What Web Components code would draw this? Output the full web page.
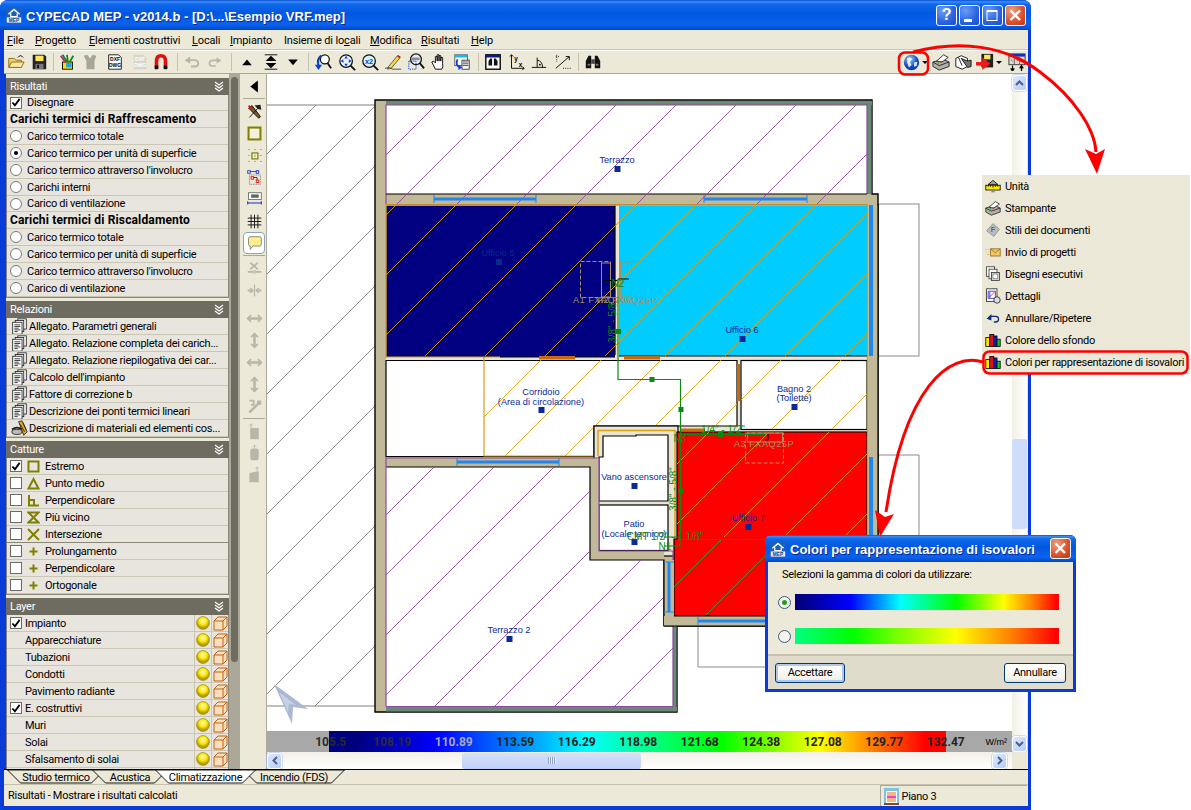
<!DOCTYPE html>
<html>
<head>
<meta charset="utf-8">
<title>CYPECAD MEP</title>
<style>
html,body{margin:0;padding:0;background:#fff;}
body{position:relative;width:1191px;height:810px;overflow:hidden;font-family:Roboto,"Liberation Sans",sans-serif;font-size:11px;letter-spacing:-.28px;color:#000;}
</style>
</head>
<body>
<xp-window>
  <xp-title slot="title" caption="CYPECAD MEP - v2014.b - [D:\...\Esempio VRF.mep]"></xp-title>
  <menu-bar slot="menu"></menu-bar>
  <tool-bar slot="tools"></tool-bar>
  <side-panel slot="side">
    <panel-box caption="Risultati" style="margin-bottom:3px">
      <panel-row type="check" checked h="16">Disegnare</panel-row>
      <panel-row type="bold">Carichi termici di Raffrescamento</panel-row>
      <panel-row type="radio">Carico termico totale</panel-row>
      <panel-row type="radio" checked>Carico termico per unità di superficie</panel-row>
      <panel-row type="radio">Carico termico attraverso l'involucro</panel-row>
      <panel-row type="radio">Carichi interni</panel-row>
      <panel-row type="radio" h="16">Carico di ventilazione</panel-row>
      <panel-row type="bold">Carichi termici di Riscaldamento</panel-row>
      <panel-row type="radio">Carico termico totale</panel-row>
      <panel-row type="radio">Carico termico per unità di superficie</panel-row>
      <panel-row type="radio">Carico termico attraverso l'involucro</panel-row>
      <panel-row type="radio">Carico di ventilazione</panel-row>
    </panel-box>
    <panel-box caption="Relazioni">
      <panel-row icon="doc">Allegato. Parametri generali</panel-row>
      <panel-row icon="doc">Allegato. Relazione completa dei carich...</panel-row>
      <panel-row icon="doc">Allegato. Relazione riepilogativa dei car...</panel-row>
      <panel-row icon="doc">Calcolo dell'impianto</panel-row>
      <panel-row icon="doc">Fattore di correzione b</panel-row>
      <panel-row icon="doc">Descrizione dei ponti termici lineari</panel-row>
      <panel-row icon="materials">Descrizione di materiali ed elementi cos...</panel-row>
    </panel-box>
    <panel-box caption="Catture">
      <panel-row type="check" checked snap="sSquare">Estremo</panel-row>
      <panel-row type="check" snap="sTri">Punto medio</panel-row>
      <panel-row type="check" snap="sPerp">Perpendicolare</panel-row>
      <panel-row type="check" snap="sNear">Più vicino</panel-row>
      <panel-row type="check" snap="sX" style="border-bottom-color:#8a8778">Intersezione</panel-row>
      <panel-row type="check" snap="sPlus">Prolungamento</panel-row>
      <panel-row type="check" snap="sPlus">Perpendicolare</panel-row>
      <panel-row type="check" snap="sPlus">Ortogonale</panel-row>
    </panel-box>
    <panel-box caption="Layer">
      <panel-row type="check" checked layer>Impianto</panel-row>
      <panel-row type="plain" layer>Apparecchiature</panel-row>
      <panel-row type="plain" layer>Tubazioni</panel-row>
      <panel-row type="plain" layer>Condotti</panel-row>
      <panel-row type="plain" layer>Pavimento radiante</panel-row>
      <panel-row type="check" checked layer>E. costruttivi</panel-row>
      <panel-row type="plain" layer>Muri</panel-row>
      <panel-row type="plain" layer>Solai</panel-row>
      <panel-row type="plain" layer>Sfalsamento di solai</panel-row>
      <panel-row type="plain" layer></panel-row>
    </panel-box>
  </side-panel>
  <v-toolbar slot="vtools"></v-toolbar>
  <cad-view slot="view"></cad-view>
  <tab-strip slot="tabs">
    <cad-tab w="98">Studio termico</cad-tab>
    <cad-tab w="76">Acustica</cad-tab>
    <cad-tab w="101" active>Climatizzazione</cad-tab>
    <cad-tab w="102">Incendio (FDS)</cad-tab>
  </tab-strip>
  <status-bar slot="status"></status-bar>
</xp-window>
<popup-menu>
  <popup-item icon="mUnit">Unità</popup-item>
  <popup-item icon="printer">Stampante</popup-item>
  <popup-item icon="mKey">Stili dei documenti</popup-item>
  <popup-item icon="mMail">Invio di progetti</popup-item>
  <popup-item icon="mDocs">Disegni esecutivi</popup-item>
  <popup-item icon="mDetail">Dettagli</popup-item>
  <popup-item icon="mUndo">Annullare/Ripetere</popup-item>
  <popup-item icon="bars">Colore dello sfondo</popup-item>
  <popup-item icon="bars">Colori per rappresentazione di isovalori</popup-item>
</popup-menu>
<iso-dialog></iso-dialog>
<callout-arrows></callout-arrows>

<script>
// helper for the shadow root of each element
function shadow(el, html){
    el.attachShadow({mode: 'open'});
    el.shadowRoot.innerHTML = html;
    return el.shadowRoot;
}
const LOGO = `<rect x="0" y="0" width="20" height="20" rx="1" fill="#1c5fb8"/><path d="M3 9 L10 3 L17 9 M6 8V12H14V8 M8 6V4M12 6V4" fill="none" stroke="#fff" stroke-width="1.6"/><rect x="1" y="13" width="18" height="6.5" fill="#e8eef8"/><text x="10" y="18.6" font-size="6" font-weight="700" text-anchor="middle" fill="#123a80" font-family="Liberation Sans">MEP</text>`;
const ln = 'fill="none" stroke="#000"';
const ICONS = {
    logo: LOGO,
    open: `<path d="M2 6H8L10 8H16V16H2Z" fill="#f4d070" stroke="#8a6a10"/><path d="M2 16L5 10H19L16 16Z" fill="#fbe7a0" stroke="#8a6a10"/><path d="M12 5Q15 1 18 5" ${ln} stroke-width="1"/>`,
    save: `<path d="M3 2H16L18 4V18H3Z" fill="#222"/><rect x="6" y="3" width="9" height="6" fill="#ffe860"/><rect x="6" y="12" width="9" height="6" fill="#777"/><rect x="8" y="13" width="2" height="4" fill="#111"/>`,
    wand: `<rect x="5" y="10" width="11" height="8" fill="#ffd800" stroke="#000"/><rect x="9" y="11" width="6" height="5" fill="#18a8e8"/><path d="M5 2L10 10M10 2L11 10M17 3L13 10" stroke="#0a8a20" stroke-width="2"/><path d="M3 3L8 10" stroke="#c02080" stroke-width="2"/>`,
    shirt: `<path d="M3 3L7 2L10 6L13 2L17 3L15 9V18H6V9Z" fill="#a8a698"/>`,
    dxf: `<path d="M3 2H14L17 5V18H3Z" fill="#fff" stroke="#111"/><text x="10" y="9" font-size="5.5" font-weight="700" text-anchor="middle" font-family="Liberation Sans">DXF</text><text x="10" y="15.5" font-size="5.5" font-weight="700" text-anchor="middle" font-family="Liberation Sans">DWG</text>`,
    dxf2: `<path d="M3 2H14L17 5V18H3Z" fill="#d8d6c8"/><text x="10" y="9" font-size="5.5" font-weight="700" text-anchor="middle" fill="#fff" font-family="Liberation Sans">DXF</text><text x="10" y="15.5" font-size="5.5" font-weight="700" text-anchor="middle" fill="#fff" font-family="Liberation Sans">DWG</text>`,
    magnet: `<path d="M5 17V9Q5 3 10 3Q15 3 15 9V17" fill="none" stroke="#e01010" stroke-width="4"/><rect x="3" y="14" width="4" height="4" fill="#111"/><rect x="13" y="14" width="4" height="4" fill="#111"/>`,
    undo: `<path d="M5 8H13Q17 8 17 12Q17 15 13 15H9" fill="none" stroke="#b8b6a8" stroke-width="2"/><path d="M8 4V12L2 8Z" fill="#b8b6a8"/>`,
    redo: `<path d="M15 8H7Q3 8 3 12Q3 15 7 15H11" fill="none" stroke="#b8b6a8" stroke-width="2"/><path d="M12 4V12L18 8Z" fill="#b8b6a8"/>`,
    up: `<path d="M4 14L10 7L16 14Z" fill="#000"/>`,
    both: `<path d="M3 2H17" stroke="#000"/><path d="M4 9L10 3L16 9Z" fill="#000"/><path d="M3 18H17" stroke="#000"/><path d="M4 11L10 17L16 11Z" fill="#000"/>`,
    down: `<path d="M4 7L10 14L16 7Z" fill="#000"/>`,
    zoomA: `<circle cx="12" cy="7" r="5" fill="#fff" stroke="#111" stroke-width="1.4"/><path d="M15 11L19 17" stroke="#111" stroke-width="2"/><path d="M8 3Q3 7 5 14" fill="none" stroke="#0a40d0" stroke-width="2.4"/><path d="M1 13L5 19L9 13Z" fill="#0a40d0"/>`,
    zoomB: `<circle cx="9" cy="9" r="7" fill="#eaf4ff" stroke="#111" stroke-width="1.4"/><path d="M14 14L19 19" stroke="#111" stroke-width="2"/><path d="M9 3L11 6H7ZM9 15L11 12H7ZM3 9L6 7V11ZM15 9L12 7V11Z" fill="#0a40d0"/>`,
    zoom2: `<circle cx="9" cy="9" r="7" fill="#d8f0f8" stroke="#111" stroke-width="1.4"/><path d="M14 14L19 19" stroke="#111" stroke-width="2"/><text x="9" y="12" font-size="8" text-anchor="middle" fill="#0a40d0" font-family="Liberation Sans">x2</text>`,
    pencil: `<path d="M5 15L15 3L18 5L8 17L4 18Z" fill="#f8d840" stroke="#555"/><path d="M15 3L18 5" stroke="#d02020" stroke-width="2"/><path d="M1 17Q6 15 10 18H19" fill="none" stroke="#444"/>`,
    zoomC: `<circle cx="10" cy="7" r="6" fill="#e8f0f0" stroke="#111" stroke-width="1.4"/><path d="M14 11L19 17" stroke="#111" stroke-width="2"/><rect x="2" y="9" width="8" height="9" fill="none" stroke="#1040d0" stroke-dasharray="1.5 1"/><rect x="5" y="5" width="9" height="3" fill="#88a"/>`,
    hand: `<path d="M6 18L2 10L4 9L6 11V4H8V9V2H10V9V3H12V9V5H14V12Q15 16 13 18Z" fill="#fff" stroke="#000"/>`,
    winCopy: `<rect x="2" y="2" width="14" height="12" fill="#fff" stroke="#555"/><rect x="2" y="2" width="14" height="3" fill="#18b8e8"/><rect x="10" y="8" width="8" height="10" fill="#fff" stroke="#333"/><path d="M11 10H17M11 12H17M11 14H17" stroke="#444"/><path d="M5 7Q2 14 8 16" fill="none" stroke="#0a40d0" stroke-width="2"/><path d="M6 13V19L10 16Z" fill="#0a40d0"/>`,
    binoWin: `<rect x="2" y="2" width="16" height="16" fill="#fff" stroke="#000" stroke-width="1.5"/><rect x="2" y="2" width="16" height="3" fill="#0a1a80"/><path d="M5 14V9L7 6H9V14ZM11 14V6H13L15 9V14Z" fill="#111"/>`,
    axes: `<path d="M5 2V17H19M3 4L5 2L7 4M17 15L19 17L17 19" ${ln}/><text x="8" y="9" font-size="7" font-family="Liberation Sans">y</text><text x="13" y="15" font-size="7" font-family="Liberation Sans">x</text>`,
    angle: `<path d="M2 16H18M8 16V5M8 8Q14 9 14 16" ${ln}/><circle cx="11" cy="13" r="1"/>`,
    snap: `<path d="M2 17L17 4M13 4H17V8" ${ln}/><path d="M3 2V10M10 17H19M2 4H6" fill="none" stroke="#000" stroke-dasharray="1 1.5"/>`,
    binoc: `<path d="M2 17V9L5 3H8V17ZM12 17V3H15L18 9V17Z" fill="#111"/><rect x="8" y="7" width="4" height="5" fill="#444"/><rect x="4" y="12" width="3" height="2" fill="#777"/><rect x="13" y="12" width="3" height="2" fill="#777"/>`,
    globe: `<defs><radialGradient id="g" cx=".4" cy=".3"><stop offset="0" stop-color="#9cd4ff"/><stop offset="1" stop-color="#0a44b8"/></radialGradient></defs><circle cx="10" cy="10" r="9" fill="url(#g)"/><path d="M5 5Q9 3 11 6L8 9L10 13L7 16L5 10ZM13 10L17 9L16 14L13 15Z" fill="#fff" opacity=".85"/>`,
    printer: `<path d="M1 10L12 7L19 10V15L8 19L1 15Z" fill="#b0b0a8" stroke="#222"/><path d="M1 10L8 14L19 10" fill="none" stroke="#222"/><path d="M5 9L13 2L18 5L11 10Z" fill="#fff" stroke="#222"/><circle cx="7" cy="11" r="1" fill="#20b040"/><circle cx="10" cy="10" r="1" fill="#e02020"/>`,
    camera: `<path d="M2 6L8 3L15 6V15L9 18L2 15Z" fill="#fff" stroke="#111"/><path d="M8 6L15 9L19 8V15L15 16Z" fill="#777" stroke="#111"/><path d="M5 5L9 14" stroke="#111"/>`,
    saveArrow: `<rect x="6" y="1" width="13" height="15" fill="#222"/><rect x="9" y="2" width="7" height="5" fill="#ffe860"/><path d="M0 10H7V5L16 12L7 19V14H0Z" fill="#f01818"/>`,
    columns: `<rect x="1" y="1" width="18" height="12" fill="#dcdcd0" stroke="#333"/><rect x="1" y="1" width="18" height="3" fill="#1030c0"/><path d="M7 4V13M13 4V13" stroke="#555"/><path d="M3 7L5 9M9 7L11 9M15 7L17 9" stroke="#c02020"/><path d="M5 14V20M3 17L5 20L7 17M15 20V14M13 17L15 14L17 17" ${ln} stroke-width="1.4"/>`,
    back: `<path d="M14 3V17L5 10Z" fill="#000"/>`,
    hammer: `<path d="M4 17L14 6M3 6L7 3L17 16L15 18Z" fill="#7a5a20" stroke="#000"/><path d="M10 3L17 2L18 8L14 7Z" fill="#222"/><path d="M3 3L7 7" stroke="#d02020" stroke-width="2"/>`,
    vSquare: `<rect x="3" y="3" width="14" height="14" fill="#f2f0e0" stroke="#808000" stroke-width="2.4"/>`,
    vDots: `<rect x="7" y="7" width="7" height="7" fill="none" stroke="#808000" stroke-width="1.4"/><circle cx="10.5" cy="10.5" r=".8" fill="#808000"/><path d="M3 3H4M10 3H11M17 3H18M3 10H4M17 10H18M3 17H4M10 17H11M17 17H18" stroke="#1030d0"/>`,
    vBoxes: `<rect x="2" y="2" width="3" height="3" fill="none" stroke="#1030d0"/><rect x="12" y="2" width="3" height="3" fill="none" stroke="#1030d0"/><path d="M5 3H12" stroke="#1030d0"/><rect x="4" y="7" width="13" height="11" fill="none" stroke="#666" stroke-dasharray="1 1"/><rect x="6" y="9" width="3" height="3" fill="none" stroke="#e01010"/><rect x="12" y="13" width="3" height="3" fill="none" stroke="#e01010"/><path d="M9 10H13V13" stroke="#222" fill="none"/>`,
    vRuler: `<rect x="3" y="2" width="15" height="8" fill="#fff" stroke="#666"/><rect x="6" y="4" width="9" height="4" fill="#666"/><path d="M2 14H18M2 12V16M18 12V16" fill="none" stroke="#1030d0" stroke-width="1.2"/>`,
    vGrid: `<path d="M6 2V18M10 2V18M14 2V18M2 6H18M2 10H18M2 14H18" ${ln} stroke-width="1"/>`,
    vBubble: `<path d="M3 4Q3 2 5 2H16Q18 2 18 4V11Q18 13 16 13H8L5 17V13Q3 13 3 11Z" fill="#ffef8a" stroke="#777"/>`,
    dCross: `<path d="M5 3L14 11M14 3L5 11M2 14H18" stroke="#b8b6a8" stroke-width="2" fill="none"/><rect x="8" y="12" width="4" height="4" fill="#c8c6b8"/>`,
    dIn: `<path d="M10 3V17" stroke="#b8b6a8" stroke-width="1.5"/><path d="M2 10H8M18 10H12" stroke="#b8b6a8" stroke-width="2.4"/><path d="M5 7L8 10L5 13M15 7L12 10L15 13" fill="none" stroke="#b8b6a8" stroke-width="1.6"/>`,
    dH: `<path d="M2 10H18" stroke="#b8b6a8" stroke-width="3"/><path d="M6 6L2 10L6 14M14 6L18 10L14 14" fill="none" stroke="#b8b6a8" stroke-width="2"/>`,
    dV: `<path d="M10 2V18" stroke="#b8b6a8" stroke-width="3"/><path d="M6 6L10 2L14 6M6 14L10 18L14 14" fill="none" stroke="#b8b6a8" stroke-width="2"/>`,
    dQ: `<path d="M4 17L15 6" stroke="#b8b6a8" stroke-width="3"/><path d="M4 3H9V8H6" fill="none" stroke="#b8b6a8" stroke-width="2"/><rect x="13" y="3" width="5" height="5" fill="#b8b6a8"/>`,
    dW1: `<rect x="5" y="6" width="10" height="13" fill="#b8b6a8"/><path d="M6 1V6M4 3L6 1L8 3" fill="none" stroke="#b8b6a8"/>`,
    dW2: `<rect x="5" y="4" width="10" height="14" rx="3" fill="#b8b6a8"/><path d="M10 0V4M8 2L10 0L12 2" fill="none" stroke="#b8b6a8"/>`,
    dW3: `<path d="M4 7L15 5V18H4Z" fill="#b8b6a8"/><path d="M13 0V5M11 2L13 0L15 2" fill="none" stroke="#b8b6a8"/>`,
    doc: `<rect x="8" y="1" width="10" height="12" fill="#fff" stroke="#222"/><rect x="5" y="3" width="10" height="13" fill="#fff" stroke="#222"/><rect x="2" y="5" width="11" height="14" fill="#fff" stroke="#222"/><path d="M4 8H11M4 10H11M4 12H9M4 14H11M4 16H8" stroke="#222"/>`,
    materials: `<path d="M9 2L13 1L19 14L15 18Z" fill="#e8a820" stroke="#222"/><path d="M11 5L16 14M14 3L18 12" stroke="#222"/><ellipse cx="7" cy="14" rx="6" ry="3" fill="#bbb" stroke="#222"/><path d="M1 11Q7 7 13 11" fill="none" stroke="#222" stroke-width="2"/>`,
    sSquare: `<rect x="1.5" y="1.5" width="10" height="10" fill="none" stroke="#808000" stroke-width="2"/>`,
    sTri: `<path d="M6.5 2L11.5 11.5H1.5Z" fill="none" stroke="#808000" stroke-width="2"/>`,
    sPerp: `<path d="M2 1V11.5H12M2 6H7V11" fill="none" stroke="#808000" stroke-width="2"/>`,
    sNear: `<path d="M1.5 1.5H11.5L1.5 11.5H11.5Z" fill="none" stroke="#808000" stroke-width="2"/>`,
    sX: `<path d="M1 1L12 12M12 1L1 12" stroke="#808000" stroke-width="2"/>`,
    sPlus: `<path d="M6.5 2.5V10.5M2.5 6.5H10.5" stroke="#808000" stroke-width="2"/>`,
    bars: `<rect x="1" y="7" width="5" height="11" fill="#ffe800" stroke="#000"/><rect x="6" y="3" width="5" height="15" fill="#e01010" stroke="#000"/><rect x="11" y="5" width="4" height="13" fill="#1020d0" stroke="#000"/><rect x="15" y="9" width="4" height="9" fill="#10d010" stroke="#000"/>`,
    mUnit: `<rect x="1" y="9" width="18" height="6" fill="#ffe800" stroke="#000"/><path d="M4 9V11M7 9V11M10 9V12M13 9V11M16 9V11" stroke="#000"/><path d="M4 8L10 3L16 8Z" fill="#aaa" stroke="#000"/><rect x="8" y="15" width="4" height="3" fill="#888"/>`,
    mKey: `<path d="M10 2L18 9L11 18L2 11Z" fill="#b8bcc0" stroke="#8a8e92"/><text x="10" y="13" font-size="9" font-weight="700" text-anchor="middle" fill="#666" font-family="Liberation Sans">F</text>`,
    mMail: `<rect x="7" y="6" width="12" height="9" fill="#f0c860" stroke="#8a6a20"/><path d="M7 6L13 11L19 6" fill="none" stroke="#8a6a20"/><path d="M1 7H2M4 7H5M1 10H2M4 10H5M3 13H5" stroke="#c8a040"/>`,
    mDocs: `<rect x="2" y="1" width="10" height="12" fill="#fff" stroke="#333"/><rect x="5" y="4" width="10" height="12" fill="#fff" stroke="#333"/><rect x="8" y="8" width="10" height="10" fill="#e8e8e0" stroke="#333"/><rect x="10" y="10" width="6" height="6" fill="#fff" stroke="#777"/>`,
    mDetail: `<rect x="2" y="1" width="13" height="16" fill="#fff" stroke="#222"/><path d="M4 4H13V13H4Z" fill="none" stroke="#1020d0"/><path d="M5 12L12 5" stroke="#e01010"/><path d="M6 5V12" stroke="#1020d0"/><circle cx="15" cy="15" r="4" fill="#ddd" stroke="#222"/>`,
    mUndo: `<path d="M7 8H13Q17 8 17 11.5Q17 15 13 15H11" fill="none" stroke="#0a2a80" stroke-width="1.6"/><path d="M8 5V13L2 11Z" fill="#0a2a80"/>`,
    bulb: `<defs><radialGradient id="b" cx=".5" cy=".35"><stop offset="0" stop-color="#fffbd0"/><stop offset=".6" stop-color="#ffe800"/><stop offset="1" stop-color="#b8a000"/></radialGradient></defs><circle cx="7" cy="7" r="6.4" fill="url(#b)" stroke="#8a8000" stroke-width=".6"/>`,
    cube: `<path d="M1 5H10V14H1ZM1 5L5 1H14V10L10 14M10 5L14 1" fill="#fbe0c0" stroke="#c06010" stroke-width="1"/>`
};

class CadIcon extends HTMLElement {
    connectedCallback(){
        if(this.shadowRoot) return;
        const s = this.getAttribute('size') || 20;
        const vb = this.getAttribute('vb') || 20;
        shadow(this, `<style>:host{display:inline-block;width:${s}px;height:${s}px;line-height:0;flex:none;letter-spacing:0}svg{display:block}</style>
        <svg width="${s}" height="${s}" viewBox="0 0 ${vb} ${vb}">${ICONS[this.getAttribute('name')] || ''}</svg>`);
    }
}
customElements.define('cad-icon', CadIcon);

class XpWindow extends HTMLElement {
    constructor(){
        super();
        shadow(this, `<style>
        :host{display:flex;flex-direction:column;width:1031px;height:810px;box-sizing:border-box;background:#0a3ad8;border-radius:8px 8px 0 0;overflow:hidden;padding-bottom:4px}
        .client{flex:1;display:flex;flex-direction:column;margin:0 3.5px 0 4px;background:#ece9d8;min-height:0}
        .main{height:695px;display:flex}
        .gap{width:2px;background:#ece9d8}
        </style>
        <slot name="title"></slot>
        <div class="client">
            <slot name="menu"></slot>
            <slot name="tools"></slot>
            <div class="main">
                <slot name="side"></slot>
                <div class="gap"></div>
                <slot name="vtools"></slot>
                <slot name="view"></slot>
            </div>
            <slot name="tabs"></slot>
            <slot name="status"></slot>
        </div>`);
    }
}
customElements.define('xp-window', XpWindow);

const CAPTION_BG = 'linear-gradient(180deg,#0a4fd0 0,#3b8cf6 6%,#1068ea 14%,#0058e2 45%,#0a62ee 82%,#0048c4 100%)';
const CAPTION_FONT = '700 13px "Liberation Sans",sans-serif';
class XpTitle extends HTMLElement {
    connectedCallback(){
        shadow(this, `<style>
        :host{display:flex;align-items:center;height:30px;background:${CAPTION_BG};padding-left:6px;box-sizing:border-box}
        .txt{font:${CAPTION_FONT};letter-spacing:0;color:#fff;margin-left:4px;padding-top:2px;text-shadow:1px 1px 0 #0a2a90;white-space:nowrap;flex:1}
        .btns{display:flex;gap:2px;margin-right:5px}
        </style>
        <cad-icon name="logo" size="16"></cad-icon>
        <div class="txt">${this.getAttribute('caption')}</div>
        <div class="btns"><cap-btn kind="help"></cap-btn><cap-btn kind="min"></cap-btn><cap-btn kind="max"></cap-btn><cap-btn kind="close"></cap-btn></div>`);
    }
}
customElements.define('xp-title', XpTitle);

class CapBtn extends HTMLElement {
    connectedCallback(){
        const k = this.getAttribute('kind');
        const body = {
            help: '<span>?</span>',
            min: '<svg width="21" height="21"><rect x="5" y="14" width="8" height="3" fill="#fff"/></svg>',
            max: '<svg width="21" height="21"><rect x="5" y="5.5" width="10" height="10" fill="none" stroke="#fff"/><rect x="5" y="5" width="10" height="2" fill="#fff"/></svg>',
            close: '<svg width="21" height="21"><path d="M5.5 5.5L15 15M15 5.5L5.5 15" stroke="#fff" stroke-width="2.4"/></svg>'
        }[k];
        const bg = k == 'close' ? 'radial-gradient(circle at 30% 25%,#f0a080,#d8502c 60%,#b83818)' : 'radial-gradient(circle at 30% 25%,#6c9cf4,#2a62e0 60%,#1a4ccc)';
        shadow(this, `<style>
        :host{display:flex;flex:none;align-items:center;justify-content:center;width:21px;height:21px;box-sizing:border-box;border:1px solid #fff;border-radius:3px;background:${bg};overflow:hidden}
        span{font:700 16px "Liberation Sans",sans-serif;color:#fff}
        svg{flex:none;margin:-1px}
        </style>${body}`);
    }
}
customElements.define('cap-btn', CapBtn);

class MenuBar extends HTMLElement {
    constructor(){
        super();
        const items = [['File',0],['Progetto',0],['Elementi costruttivi',0],['Locali',0],['Impianto',0],['Insieme di locali',13],['Modifica',0],['Risultati',0],['Help',0]];
        const lefts = [3,31,85,188,226,280,366,417,467];
        const html = items.map((it,i) => {
            const t = it[0], u = it[1];
            const w = (lefts[i+1] || 520) - lefts[i];
            return `<span style="width:${w}px">${t.slice(0,u)}<u>${t[u]}</u>${t.slice(u+1)}</span>`;
        }).join('');
        shadow(this, `<style>
        :host{display:flex;align-items:center;height:20px;padding:1px 0 0 3px;box-sizing:border-box;border-bottom:1px solid #c8c5b2;letter-spacing:-.15px}
        span{display:inline-block;white-space:nowrap}
        </style>${html}`);
    }
}
customElements.define('menu-bar', MenuBar);

class ToolBar extends HTMLElement {
    constructor(){
        super();
        const sep = w => `<i class="sep" style="width:${w}px"></i>`;
        const b = (n,w,size) => `<b style="width:${w}px"><cad-icon name="${n}" size="${size||18}"></cad-icon></b>`;
        shadow(this, `<style>
        :host{display:flex;align-items:center;height:24px;box-sizing:border-box;border-top:1px solid #fff;border-bottom:1px solid #aca899}
        b{display:flex;align-items:center;justify-content:center;height:22px;flex:none}
        .sep{display:block;height:18px;flex:none;background:linear-gradient(#c5c2b0,#c5c2b0) center/1px 100% no-repeat}
        .fill{flex:1}
        .drop{width:0;height:0;border:3px solid transparent;border-top:3px solid #000;border-bottom:0;margin-left:2px}
        </style>
        ${b('open',23)}${b('save',23)}${sep(6)}${b('wand',21)}${b('shirt',26)}${b('dxf',24)}${b('dxf2',25)}${b('magnet',18)}${sep(14)}
        ${b('undo',16)}${b('redo',30,16)}${sep(2)}${b('up',30,16)}${b('both',18,18)}${b('down',26,16)}${sep(4)}
        ${b('zoomA',26)}${b('zoomB',22)}${b('zoom2',24)}${b('pencil',22)}${b('zoomC',24)}${b('hand',22)}${b('winCopy',24)}${sep(8)}
        ${b('binoWin',22)}${b('axes',24)}${b('angle',22)}${b('snap',26)}${sep(4)}${b('binoc',26)}
        <div class="fill"></div>
        <b style="width:28px;padding-left:2px;box-sizing:border-box"><cad-icon name="globe" size="17"></cad-icon><span class="drop"></span></b>
        ${b('printer',24)}${b('camera',20)}
        <b style="width:33px"><cad-icon name="saveArrow" size="18"></cad-icon><span class="drop"></span></b>
        ${b('columns',22)}`);
    }
}
customElements.define('tool-bar', ToolBar);

class SidePanel extends HTMLElement {
    constructor(){
        super();
        shadow(this, `<style>
        :host{display:flex;width:236px;height:695px;box-sizing:border-box;background:#ece9d8;overflow:hidden;flex:none}
        .list{width:225px;box-sizing:border-box;padding:4px 0 0 2px;background:linear-gradient(90deg,#0a3ad8 2px,#ece9d8 2px);overflow:hidden}
        .track{width:11px;background:#aca899;padding:3px 2px 0;box-sizing:border-box;margin-top:0}
        .thumb{height:585px;background:#6e6b60;border-radius:4px}
        </style>
        <div class="list"><slot></slot></div>
        <div class="track"><div class="thumb"></div></div>`);
    }
}
customElements.define('side-panel', SidePanel);

class PanelBox extends HTMLElement {
    connectedCallback(){
        shadow(this, `<style>
        :host{display:block;margin-bottom:3px;width:223px;box-sizing:border-box;border:1px solid #8a8778;border-top:0;background:#e8e5de}
        .h{display:flex;align-items:center;justify-content:space-between;height:17px;margin:0 -1px;padding:0 5px 0 4px;background:#6e6b60;color:#fff;box-sizing:border-box}
        </style>
        <div class="h"><span>${this.getAttribute('caption')}</span>
        <svg width="10" height="12" viewBox="0 0 10 12"><path d="M1 1L5 4L9 1M1 4L5 7L9 4M1 7L5 10L9 7" fill="none" stroke="#fff" stroke-width="1.1"/></svg></div>
        <slot></slot>`);
    }
}
customElements.define('panel-box', PanelBox);

class PanelRow extends HTMLElement {
    connectedCallback(){
        const type = this.getAttribute('type');
        const on = this.hasAttribute('checked');
        let pre = '';
        if(type == 'check') pre = `<span class="chk">${on ? '<svg width="11" height="11" viewBox="0 0 11 11"><path d="M1.5 5.5L4.3 8.5L9.5 1.5" fill="none" stroke="#000" stroke-width="2"/></svg>' : ''}</span>`;
        if(type == 'radio') pre = `<span class="rad">${on ? '<i></i>' : ''}</span>`;
        if(type == 'plain') pre = '<span class="sp"></span>';
        const icon = this.getAttribute('icon');
        if(icon) pre += `<cad-icon name="${icon}" size="17" style="margin:0 1px 0 1px"></cad-icon>`;
        const snap = this.getAttribute('snap');
        if(snap) pre += `<cad-icon name="${snap}" size="13" vb="13" style="margin:0 2px 0 3px"></cad-icon>`;
        const layer = this.hasAttribute('layer')
            ? `<span class="lc"><cad-icon name="bulb" size="14" vb="14"></cad-icon></span><span class="lc"><cad-icon name="cube" size="15" vb="15"></cad-icon></span>` : '';
        const h = this.getAttribute('h') || 17;
        shadow(this, `<style>
        :host{display:flex;align-items:center;height:${h}px;box-sizing:border-box;border-bottom:1px solid #c9c6b4;padding-left:3px;overflow:hidden;white-space:nowrap;${type=='bold'?'font-weight:700;font-size:12px;letter-spacing:.15px;':''}}
        .t{flex:1;overflow:hidden;padding-left:${type=='bold'?0:(icon?0:3)}px}
        .chk{flex:none;width:12px;height:12px;box-sizing:border-box;border:1px solid #6a6a6a;background:#fff;display:flex;align-items:center;justify-content:center;margin-right:${layer?0:2}px}
        .rad{flex:none;width:12px;height:12px;box-sizing:border-box;border:1px solid #7a7a7a;border-radius:50%;background:#fff;display:flex;align-items:center;justify-content:center;margin-right:2px}
        .rad i{width:4px;height:4px;border-radius:50%;background:#000}
        .sp{width:12px;flex:none}
        .lc{flex:none;width:17px;height:100%;box-sizing:border-box;border-left:1px solid #c9c6b4;display:flex;align-items:center;justify-content:center}
        </style>${pre}<span class="t"><slot></slot></span>${layer}`);
    }
}
customElements.define('panel-row', PanelRow);

class VToolbar extends HTMLElement {
    constructor(){
        super();
        const it = (n,cls) => `<b class="${cls||''}"><cad-icon name="${n}" size="17"></cad-icon></b>`;
        shadow(this, `<style>
        :host{display:flex;flex-direction:column;align-items:center;width:25px;height:695px;box-sizing:border-box;border-right:1px solid #aca899;background:#ece9d8;padding-top:1px;flex:none}
        b{display:flex;align-items:center;justify-content:center;width:22px;height:22px;flex:none;box-sizing:border-box}
        .on{background:#fff;border:1px solid #8ca6b8;border-radius:4px}
        hr{width:22px;margin:1px 0;border:0;border-top:1px solid #aca899;flex:none;height:0}
        .sp{height:6px;flex:none}
        </style>
        ${it('back')}<hr style="margin:1px 0 1px">
        ${it('hammer')}${it('vSquare')}${it('vDots')}${it('vBoxes')}${it('vRuler')}${it('vGrid')}${it('vBubble','on')}
        <hr style="margin:1px 0 1px">
        ${it('dCross')}${it('dIn')}<div class="sp"></div>${it('dH')}${it('dV')}${it('dH')}${it('dV')}${it('dQ')}
        <hr style="margin:1px 0 1px">
        ${it('dW1')}${it('dW2')}${it('dW3')}`);
    }
}
customElements.define('v-toolbar', VToolbar);

class CadView extends HTMLElement {
    constructor(){
        super();
        shadow(this, `<style>
        :host{display:grid;grid-template-columns:745px 15px;grid-template-rows:657px 21px 17px;width:760px;height:695px;flex:none;background:#fff}
        cad-plan{grid-column:1;grid-row:1}
        legend-bar{grid-column:1;grid-row:2}
        v-scroll{grid-column:2;grid-row:1 / 3}
        h-scroll{grid-column:1;grid-row:3}
        .corner{grid-column:2;grid-row:3;background:#ece9d8}
        </style>
        <cad-plan></cad-plan><legend-bar></legend-bar><v-scroll></v-scroll><h-scroll></h-scroll><div class="corner"></div>`);
    }
}
customElements.define('cad-view', CadView);

class CadPlan extends HTMLElement {
    constructor(){
        super();
        const TAN = '#c2b998', BEIGE = '#e8e4d6', GREEN = '#6a8a78', BLUE = '#1e88f0', ORANGE = '#d8a010', PURPLE = '#8e4a9e', LBL = '#0a2a9a';
        const hatch = (color, clip, w) => {
            let s = `<g clip-path="url(#${clip})" stroke="${color}" stroke-width="${w||0.9}">`;
            for(let c = 422 - 60; c < 1700; c += 60) s += `<line x1="${c-40}" y1="40" x2="${c-800}" y2="800"/>`;
            return s + '</g>';
        };
        const win = (x1,x2,y) => `<path d="M${x1} ${y-4}V${y+4}M${x2} ${y-4}V${y+4}" stroke="${BLUE}"/><rect x="${x1}" y="${y-1.5}" width="${x2-x1}" height="3" fill="${BLUE}"/>`;
        const lab = (x,y,lines) => lines.map((t,i) => `<text x="${x}" y="${y+1+i*9.5}" text-anchor="middle" fill="${LBL}" font-size="9.2">${t}</text>`).join('');
        const sq = (x,y,c,s) => { s = s || 6; return `<rect x="${x-s/2}" y="${y-s/2}" width="${s}" height="${s}" fill="${c||'#0a2a9a'}"/>`; };
        const gt = (x,y,t,rot) => `<text x="${x}" y="${y}" font-size="10" fill="#0a8a10" text-anchor="middle" ${rot?`transform="rotate(-90 ${x} ${y})"`:''}>${t}</text>`;
        const T2 = '386,468 590,468 590,561 664,561 664,627 673,627 673,707 386,707';
        const COR = '484,361 737,361 737,427 594,427 594,457 484,457';
        const RED = '677,433 867,433 867,617 674,617 674,540 677,540';
        shadow(this, `<style>:host{display:block;overflow:hidden;background:#fff;letter-spacing:0}svg{display:block;font-family:"Liberation Sans",sans-serif}</style>
        <svg width="745" height="657" viewBox="267 75 745 657">
        <defs>
            <clipPath id="cLeft"><rect x="267" y="106" width="108" height="601"/></clipPath>
            <clipPath id="cT1"><rect x="386" y="106" width="481" height="99"/></clipPath>
            <clipPath id="cU"><rect x="386" y="206" width="481" height="151"/></clipPath>
            <clipPath id="cCor"><polygon points="${COR}"/></clipPath>
            <clipPath id="cBag"><rect x="741" y="361" width="126" height="69"/></clipPath>
            <clipPath id="cRed"><rect x="677" y="433" width="190" height="105"/></clipPath>
            <clipPath id="cRed2"><rect x="674" y="541" width="193" height="76"/></clipPath>
            <clipPath id="cT2"><polygon points="${T2}"/></clipPath>
        </defs>
        <rect x="878" y="205" width="41" height="152" fill="#fff" stroke="#8a8a8a"/>
        <path d="M878 456H919V540M698 627V668H770" fill="none" stroke="#8a8a8a"/>
        <path d="M267 106H375M267 707H375" stroke="#808080"/>
        ${hatch('#808080','cLeft')}
        <polygon points="375,101 872,101 872,195 878,195 878,627 677,627 677,713 375,713" fill="${TAN}" stroke="#000" stroke-width="1.4"/>
        <rect x="386" y="102" width="486" height="4" fill="${GREEN}"/><rect x="867" y="102" width="4.4" height="93" fill="${GREEN}"/>
        <rect x="386" y="708" width="291" height="4.4" fill="${GREEN}"/><rect x="673" y="627" width="3.4" height="85" fill="${GREEN}"/>
        <rect x="386" y="106" width="481" height="89" fill="#fff"/>
        <path d="M386 205V106H867V195" fill="none" stroke="${PURPLE}" stroke-width="1.2"/>
        <path d="M386 195H867" stroke="#000" stroke-width="1.2"/>
        <path d="M386 205.5H867" stroke="${PURPLE}" stroke-width="1.2"/>
        ${hatch(PURPLE,'cT1')}
        ${win(434,536,200)}${win(704,807,200)}

        <rect x="386" y="206" width="481" height="226" fill="${BEIGE}"/>
        <rect x="386" y="206.5" width="229" height="151.5" fill="#000080"/>
        <rect x="619" y="206.5" width="248" height="150.5" fill="#00ccff"/>
        <path d="M615 206V356M619 357H867M500 358H615" stroke="#000" stroke-width="1.2"/>
        <path d="M386 358.5V206H867" fill="none" stroke="${ORANGE}" stroke-width="1.4"/>
        <path d="M386 358H500" stroke="${ORANGE}" stroke-width="1.2"/>
        ${hatch(ORANGE,'cU')}
        <rect x="539" y="357" width="36" height="3.5" fill="#c86a08"/><rect x="624" y="357" width="36" height="3.5" fill="#c86a08"/>

        <polygon points="386,361.5 737,361.5 737,427 594,427 594,457.5 386,457.5" fill="#fff" stroke="#000" stroke-width="1.2"/>
        <path d="M484 358V457H598" fill="none" stroke="${ORANGE}" stroke-width="1.2"/>
        ${hatch(ORANGE,'cCor')}
        <rect x="741" y="361.5" width="126" height="69" fill="#fff" stroke="#000" stroke-width="1.2"/>
        ${hatch(ORANGE,'cBag')}
        <rect x="737" y="365" width="3" height="37" fill="#c86a08"/>

        <rect x="594" y="427" width="84" height="130" fill="${BEIGE}" stroke="#000" stroke-width="1.2"/>
        <path d="M598 457V431.5H675V540" fill="none" stroke="${ORANGE}" stroke-width="1.4"/>
        <polygon points="603,458 603,437 636,437 636,436 668,436 668,502 599,502 599,458" fill="#fff" stroke="#000" stroke-width="1.2"/>
        <rect x="599" y="506" width="69" height="45.5" fill="#fff" stroke="#000" stroke-width="1.2"/>

        <polygon points="${RED}" fill="#ff0000" stroke="#000" stroke-width="1.2"/>
        ${hatch(ORANGE,'cRed')}${hatch('#2f9a40','cRed2')}
        <rect x="680" y="429.5" width="25" height="3" fill="#c86a08"/>

        <rect x="867" y="206" width="11" height="421" fill="${TAN}"/>
        <path d="M878 205V627" stroke="#000" stroke-width="1.2"/>
        <path d="M867.5 205V540" stroke="${ORANGE}" stroke-width="1.2"/>
        <rect x="869" y="206" width="4" height="151" fill="${BLUE}"/>
        <rect x="869" y="458" width="4" height="82" fill="${BLUE}"/>

        <polygon points="386,459 599,459 599,552 664,552 664,627 673,627 673,707.5 386,707.5" fill="${TAN}"/>
        <polygon points="${T2}" fill="#fff"/>
        <path d="M386 468H590V561H664V627" fill="none" stroke="#000" stroke-width="1.2"/>
        <path d="M386 707.5V459H599V552H673V707.5H386" fill="none" stroke="${PURPLE}" stroke-width="1.2"/>
        ${hatch(PURPLE,'cT2')}
        <rect x="664" y="561" width="10" height="66" fill="${TAN}"/>
        <path d="M664 561V627H674" fill="none" stroke="#000" stroke-width="1.2"/>
        <rect x="664" y="617" width="214" height="10" fill="${TAN}"/>
        <path d="M664 627H878M674 617H867" stroke="#000" stroke-width="1.2"/>
        ${win(457,559,463)}
        <path d="M664 563H674M664 613H674" stroke="${BLUE}"/><rect x="667.5" y="563" width="3" height="50" fill="${BLUE}"/>
        ${win(698,770,622)}

        ${lab(617,163,['Terrazzo'])}${sq(617.5,170)}
        <text x="498" y="257" text-anchor="middle" font-size="9.2" fill="#0a2a8a">Ufficio 5</text>${sq(499,263,'#0a2a8a')}
        ${lab(742,333,['Ufficio 6'])}${sq(742.5,340)}
        ${lab(541,395,['Corridoio','(Area di circolazione)'])}${sq(541.5,411)}
        ${lab(794,391.5,['Bagno 2','(Toilette)'])}${sq(794.5,408)}
        ${lab(634,480,['Vano ascensore'])}${sq(634.5,487)}
        ${lab(634,527,['Patio','(Locale tecnico)'])}${sq(634.5,543)}
        ${lab(748,521,['Ufficio 7'])}${sq(748.5,528)}
        ${lab(509,633,['Terrazzo 2'])}${sq(509.5,640)}

        <g stroke="#a89060" fill="none">
            <rect x="580.5" y="262.5" width="30" height="36" stroke-dasharray="4 2"/><rect x="601.5" y="264" width="9" height="34"/>
            <rect x="620.5" y="262.5" width="31" height="36" stroke-dasharray="4 2"/><rect x="620.5" y="263" width="11" height="35"/>
            <rect x="745.5" y="434" width="38" height="30" stroke-dasharray="4 2"/><rect x="747.5" y="434" width="35" height="9"/>
        </g>
        <text x="603" y="304" text-anchor="middle" font-size="9.2" letter-spacing=".5" fill="#a89060">A1 FXAQ20P</text>
        <text x="627" y="304" text-anchor="middle" font-size="9.2" letter-spacing=".5" fill="#a89060">A2 FXAQ25P</text>
        <text x="764" y="448" text-anchor="middle" font-size="9.2" letter-spacing=".5" fill="#a89060">A3 FXAQ25P</text>
        <path d="M603 281.5H618M618 280H629M768 435V441H765" fill="none" stroke="#000"/>

        <path d="M618 280V380.5H680.5V540.5H765M680.5 435.5H766M664 538H680V547H664" fill="none" stroke="#0a8a10" stroke-width="1.2"/>
        ${sq(618.5,332.5,'#0a8a10',5)}${sq(652,380.5,'#0a8a10',5)}${sq(681,410.5,'#0a8a10',5)}${sq(681,492,'#0a8a10',5)}${sq(720.5,435.5,'#0a8a10',5)}
        ${gt(618,288,'N2')}${gt(680,443,'N3')}${gt(723,434,'1/4" - 1/2"')}${gt(616,322,'3/8" - 5/8"',1)}${gt(677,490,'3/8" - 5/8"',1)}${gt(665,541,'CMT 1/2" - 1 1/8"')}${gt(665,551,'N1')}

        <polygon points="274,685 308,710 293,708 292,725" fill="#aab8d4"/>
        <polygon points="279,693 296,706 289,705 288,713" fill="#c7d0e2"/>
        </svg>`);
    }
}
customElements.define('cad-plan', CadPlan);

class LegendBar extends HTMLElement {
    constructor(){
        super();
        const labels = [['105.5','#2a2a2a'],['108.19','#2a2a40'],['110.89','#a8a8c0'],['113.59','#222'],['116.29','#222'],['118.98','#222'],['121.68','#222'],['124.38','#222'],['127.08','#222'],['129.77','#222'],['132.47','#222']];
        shadow(this, `<style>
        :host{display:flex;align-items:center;height:21px;padding-left:33px;box-sizing:border-box;font:700 12px Roboto,sans-serif;letter-spacing:0;
        background:linear-gradient(90deg,#a8a8a8 62px,#00007f 62px,#00007f 90px,#0000ff 170px,#00ffff 320px,#00ff00 454px,#ffff00 553px,#ff0000 658px,#ff0000 679px,#a8a8a8 679px)}
        span{width:61.5px;text-align:center;flex:none}
        .u{font:400 9px "Liberation Sans",sans-serif;width:auto;margin-left:9px}
        </style>${labels.map(l => `<span style="color:${l[1]}">${l[0]}</span>`).join('')}<span class="u">W/m²</span>`);
    }
}
customElements.define('legend-bar', LegendBar);

const SCROLL_BTN = 'box-sizing:border-box;background:linear-gradient(135deg,#dde8fe,#b8ccf8);border:1px solid #fff;border-radius:3px;box-shadow:0 0 0 .5px #a8bce8;display:flex;align-items:center;justify-content:center';
class VScroll extends HTMLElement {
    constructor(){
        super();
        shadow(this, `<style>
        :host{display:flex;flex-direction:column;height:678px;box-sizing:border-box;background:linear-gradient(90deg,#f2f0e6,#fff);padding-top:1px}
        .b{${SCROLL_BTN};height:16px;flex:none}
        .thumb{height:90px;margin-top:348px;background:#cfdcfa;border-radius:2px;flex:none}
        .fill{flex:1}
        </style>
        <div class="b"><svg width="9" height="6"><path d="M1 5L4.5 1.5L8 5" fill="none" stroke="#4d6185" stroke-width="2"/></svg></div>
        <div class="thumb"></div><div class="fill"></div>
        <div class="b"><svg width="9" height="6"><path d="M1 1L4.5 4.5L8 1" fill="none" stroke="#4d6185" stroke-width="2"/></svg></div>`);
    }
}
customElements.define('v-scroll', VScroll);

class HScroll extends HTMLElement {
    constructor(){
        super();
        shadow(this, `<style>
        :host{display:flex;align-items:center;height:17px;box-sizing:border-box;background:linear-gradient(#f2f0e6,#fff);padding-right:5px}
        .b{${SCROLL_BTN};width:15px;height:16px;flex:none}
        .thumb{width:179px;height:16px;margin-left:180px;background:linear-gradient(#d4e0fc,#bfd0f8);border-radius:2px;flex:none;display:flex;align-items:center;justify-content:center}
        .grip{width:8px;height:7px;background:repeating-linear-gradient(90deg,#8ca0c8 0 1px,#eef3ff 1px 2px)}
        .fill{flex:1}
        </style>
        <div class="b"><svg width="6" height="9"><path d="M5 1L1.5 4.5L5 8" fill="none" stroke="#4d6185" stroke-width="2"/></svg></div>
        <div class="thumb"><div class="grip"></div></div><div class="fill"></div>
        <div class="b"><svg width="6" height="9"><path d="M1 1L4.5 4.5L1 8" fill="none" stroke="#4d6185" stroke-width="2"/></svg></div>`);
    }
}
customElements.define('h-scroll', HScroll);

class TabStrip extends HTMLElement {
    constructor(){
        super();
        shadow(this, `<style>
        :host{display:flex;height:15px;box-sizing:border-box;border-top:1px solid #000;padding-left:16px;background:#ece9d8;overflow:visible}
        </style><slot></slot>`);
    }
}
customElements.define('tab-strip', TabStrip);

class CadTab extends HTMLElement {
    connectedCallback(){
        const w = +this.getAttribute('w');
        const on = this.hasAttribute('active');
        shadow(this, `<style>
        :host{display:flex;align-items:center;justify-content:center;position:relative;width:${w}px;height:14px;margin-left:-13px;flex:none;${on?'z-index:1;':''}}
        svg{position:absolute;left:0;top:0}
        span{position:relative}
        </style>
        <svg width="${w}" height="14"><polygon points="0.5,0 13.5,13 ${w-13.5},13 ${w-0.5},0" fill="${on?'#fff':'#ece9d8'}" stroke="#000" stroke-width=".9"/></svg>
        <span><slot></slot></span>`);
    }
}
customElements.define('cad-tab', CadTab);

class StatusBar extends HTMLElement {
    constructor(){
        super();
        shadow(this, `<style>
        :host{display:flex;align-items:center;flex:1;height:21px;box-sizing:border-box;border-top:1px solid #c5c2b0;padding-left:4px;background:#ece9d8}
        .t{flex:1}
        .p{display:flex;align-items:center;width:147px;height:100%;box-sizing:border-box;border:1px solid #aca899;border-width:1px 0 0 1px;padding-left:3px;gap:3px;margin-right:1px}
        </style>
        <span class="t">Risultati - Mostrare i risultati calcolati</span>
        <div class="p"><svg width="15" height="17" viewBox="0 0 15 17"><rect width="15" height="17" fill="#7cc4e0"/><rect x="2" y="3" width="11" height="12" fill="#fff"/><path d="M3 5H12M3 7H12M3 11H12M3 13H12" stroke="#f0a060" stroke-width="1.4"/><path d="M3 9H12" stroke="#f010c0" stroke-width="1.6"/><rect y="15" width="15" height="2" fill="#8a4a18"/></svg><span>Piano 3</span></div>`);
    }
}
customElements.define('status-bar', StatusBar);

class PopupMenu extends HTMLElement {
    constructor(){
        super();
        shadow(this, `<style>
        :host{position:absolute;left:982px;top:175px;width:208px;box-sizing:border-box;background:#ebe8d8;display:flex;flex-direction:column;padding-bottom:1px}
        </style><slot></slot>`);
    }
}
customElements.define('popup-menu', PopupMenu);

class PopupItem extends HTMLElement {
    connectedCallback(){
        shadow(this, `<style>
        :host{display:flex;align-items:center;height:22px;padding-left:3px;gap:4px;white-space:nowrap}
        </style><cad-icon name="${this.getAttribute('icon')}" size="16"></cad-icon><slot></slot>`);
    }
}
customElements.define('popup-item', PopupItem);

class GradBar extends HTMLElement {
    connectedCallback(){
        const g = this.getAttribute('kind') == 'a'
            ? '#00007f 0,#00007f 2%,#0000ff 21%,#00ffff 40%,#00ff00 61%,#ffff00 79%,#ff8000 90%,#ff0000 99%'
            : '#00ff80 0,#00ff00 22%,#80ff00 40%,#ffff00 61%,#ff8000 82%,#ff0000 99%';
        shadow(this, `<style>
        :host{display:flex;align-items:center;height:16px;gap:4px}
        .r{width:13px;height:13px;box-sizing:border-box;border:1.5px solid #3c5a80;border-radius:50%;background:#f4f2ea;display:flex;align-items:center;justify-content:center;flex:none}
        .r i{width:5px;height:5px;border-radius:50%;background:#1ea01e}
        .b{width:264px;height:16px;background:linear-gradient(90deg,${g})}
        </style><div class="r">${this.hasAttribute('checked') ? '<i></i>' : ''}</div><div class="b"></div>`);
    }
}
customElements.define('grad-bar', GradBar);

class XpButton extends HTMLElement {
    connectedCallback(){
        const d = this.hasAttribute('default');
        shadow(this, `<style>
        :host{display:flex;align-items:center;justify-content:center;height:20px;box-sizing:border-box;border:1px solid #003c74;border-radius:3px;background:linear-gradient(#fff,#f4f3ec 80%,#e3e0d2);${d?'box-shadow:inset 0 0 0 2px #b0c8ee;':''}}
        </style><slot></slot>`);
    }
}
customElements.define('xp-button', XpButton);

class IsoDialog extends HTMLElement {
    constructor(){
        super();
        shadow(this, `<style>
        :host{position:absolute;left:765px;top:535px;width:311px;height:157px;box-sizing:border-box;display:flex;flex-direction:column;background:#0a3ad8;border-radius:6px 6px 0 0;padding:0 3px 3px;overflow:hidden}
        .cap{display:flex;align-items:center;height:27px;margin:0 -3px;padding:0 5px;background:${CAPTION_BG};flex:none}
        .cap span{flex:1;font:${CAPTION_FONT};letter-spacing:0;color:#fff;margin-left:4px;padding-top:1px;text-shadow:1px 1px 0 #0a2a90;white-space:nowrap}
        .body{flex:1;background:#ece9d8;display:flex;flex-direction:column}
        .msg{padding:6px 0 0 14px;height:26px;box-sizing:border-box}
        .bars{display:flex;flex-direction:column;gap:18px;padding:6px 0 0 10px;height:66px;box-sizing:border-box}
        .foot{flex:1;background:#dfdccc;border-top:2px solid #c5c2b0;display:flex;justify-content:space-between;align-items:center;padding:0 7px}
        </style>
        <div class="cap"><cad-icon name="logo" size="16"></cad-icon><span>Colori per rappresentazione di isovalori</span><cap-btn kind="close"></cap-btn></div>
        <div class="body">
            <div class="msg">Selezioni la gamma di colori da utilizzare:</div>
            <div class="bars"><grad-bar kind="a" checked></grad-bar><grad-bar kind="b"></grad-bar></div>
            <div class="foot"><xp-button default style="width:70px">Accettare</xp-button><xp-button style="width:62px">Annullare</xp-button></div>
        </div>`);
    }
}
customElements.define('iso-dialog', IsoDialog);

// red callouts drawn over everything
class CalloutArrows extends HTMLElement {
    constructor(){
        super();
        shadow(this, `<style>:host{position:absolute;left:0;top:0;width:1191px;height:810px;pointer-events:none}</style>
        <svg width="1191" height="810" fill="none" stroke="#ff0000" stroke-width="3">
            <rect x="899" y="52.5" width="29" height="22" rx="6" stroke-width="2.5"/>
            <path d="M913 52C960 40 1005 45 1040 72C1075 98 1095 130 1096 152"/>
            <path d="M1085 149L1097 174L1105 149L1096 154Z" fill="#ff0000" stroke="none"/>
            <rect x="983.5" y="351.5" width="204" height="22" rx="6" stroke-width="2.5"/>
            <path d="M983 362C950 352 905 385 886 512"/>
            <path d="M875 510L880 537L894 514L885 517Z" fill="#ff0000" stroke="none"/>
        </svg>`);
    }
}
customElements.define('callout-arrows', CalloutArrows);
</script>
</body>
</html>
